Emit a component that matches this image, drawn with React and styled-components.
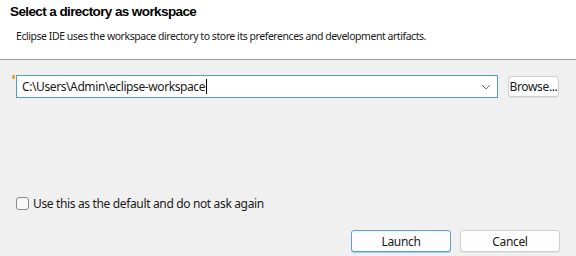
import styled, { createGlobalStyle } from "styled-components";

const Global = createGlobalStyle`
  html, body {
    margin: 0;
    padding: 0;
    background: #f0f0f0;
  }
  #root {
    width: 576px;
    height: 256px;
  }
`;

const Dialog = styled.div`
  width: 576px;
  height: 256px;
  display: flex;
  flex-direction: column;
  background: #f0f0f0;
  font-family: "Noto Sans", "Open Sans", sans-serif;
  font-size: 12px;
  letter-spacing: -0.35px;
  color: #1a1a1a;
  overflow: hidden;
`;

const Header = styled.div`
  height: 60px;
  background: #ffffff;
  border-bottom: 1px solid #a0a0a0;
  box-sizing: border-box;
  padding: 3px 0 0 10px;
  flex-shrink: 0;
`;

const Title = styled.h1`
  margin: 0;
  font-family: "Liberation Sans", Arial, sans-serif;
  font-weight: bold;
  font-size: 13.5px;
  letter-spacing: -0.6px;
  line-height: 17px;
  color: #000;
`;

const Description = styled.p`
  margin: 8px 0 0 6px;
  font-size: 10.5px;
  letter-spacing: -0.45px;
  line-height: 16px;
  color: #1a1a1a;
`;

const Body = styled.div`
  flex: 1;
  display: flex;
  flex-direction: column;
  padding: 15px 16px 4px 16px;
`;

const PathRow = styled.div`
  display: flex;
  align-items: center;
  gap: 10px;
`;

const ComboWrap = styled.div`
  position: relative;
  width: 482px;
`;

const Marker = styled.span`
  position: absolute;
  left: -4px;
  top: 0px;
  width: 3px;
  height: 4px;
  background: #f0a030;
  border-radius: 1px 1px 2px 2px;
`;

const Combo = styled.div`
  height: 23px;
  box-sizing: border-box;
  border: 1px solid #4a9be6;
  background: #fff;
  display: flex;
  align-items: center;
  padding: 0 6px 0 5px;
`;

const PathText = styled.span`
  flex: 1;
  font-size: 12px;
  letter-spacing: -0.4px;
  color: #1a1a1a;
  white-space: nowrap;
  display: flex;
  align-items: center;
`;

const Caret = styled.span`
  display: inline-block;
  width: 1px;
  height: 15px;
  background: #000;
  margin-left: 1px;
`;

const Chevron = styled.svg`
  width: 10px;
  height: 6px;
  flex-shrink: 0;
`;

const Button = styled.button`
  height: ${p => (p.$small ? "21px" : "22px")};
  width: ${p => p.$width}px;
  box-sizing: border-box;
  font-family: "Noto Sans", "Open Sans", sans-serif;
  font-size: 12px;
  letter-spacing: -0.35px;
  color: #1a1a1a;
  background: #fdfdfd;
  border: 1px solid ${p => (p.$primary ? "#5b9ee0" : "#d0d0d0")};
  border-radius: 3px;
  padding: 0;
  box-shadow: 0 1px 0 ${p => (p.$primary ? "#a8c9ee" : "#e2e2e2")};
`;

const Spacer = styled.div`
  flex: 1;
`;

const CheckRow = styled.label`
  display: flex;
  align-items: center;
  gap: 4px;
  font-size: 12px;
  color: #1a1a1a;
`;

const Box = styled.span`
  width: 13px;
  height: 13px;
  box-sizing: border-box;
  border: 1px solid #8a8a8a;
  border-radius: 3px;
  background: #f8f8f8;
`;

const ButtonRow = styled.div`
  display: flex;
  justify-content: flex-end;
  gap: 9px;
  margin-top: 18px;
`;

export default function App() {
  return (
    <>
      <Global />
      <Dialog>
        <Header>
          <Title>Select a directory as workspace</Title>
          <Description>
            Eclipse IDE uses the workspace directory to store its preferences and development artifacts.
          </Description>
        </Header>
        <Body>
          <PathRow>
            <ComboWrap>
              <Marker />
              <Combo>
                <PathText>
                  C:\Users\Admin\eclipse-workspace
                  <Caret />
                </PathText>
                <Chevron viewBox="0 0 10 6">
                  <path d="M1 1 L5 5 L9 1" fill="none" stroke="#707070" strokeWidth="1" />
                </Chevron>
              </Combo>
            </ComboWrap>
            <Button $small $width={51}>Browse...</Button>
          </PathRow>
          <Spacer />
          <CheckRow>
            <Box />
            Use this as the default and do not ask again
          </CheckRow>
          <ButtonRow>
            <Button $primary $width={100}>Launch</Button>
            <Button $width={100}>Cancel</Button>
          </ButtonRow>
        </Body>
      </Dialog>
    </>
  );
}
